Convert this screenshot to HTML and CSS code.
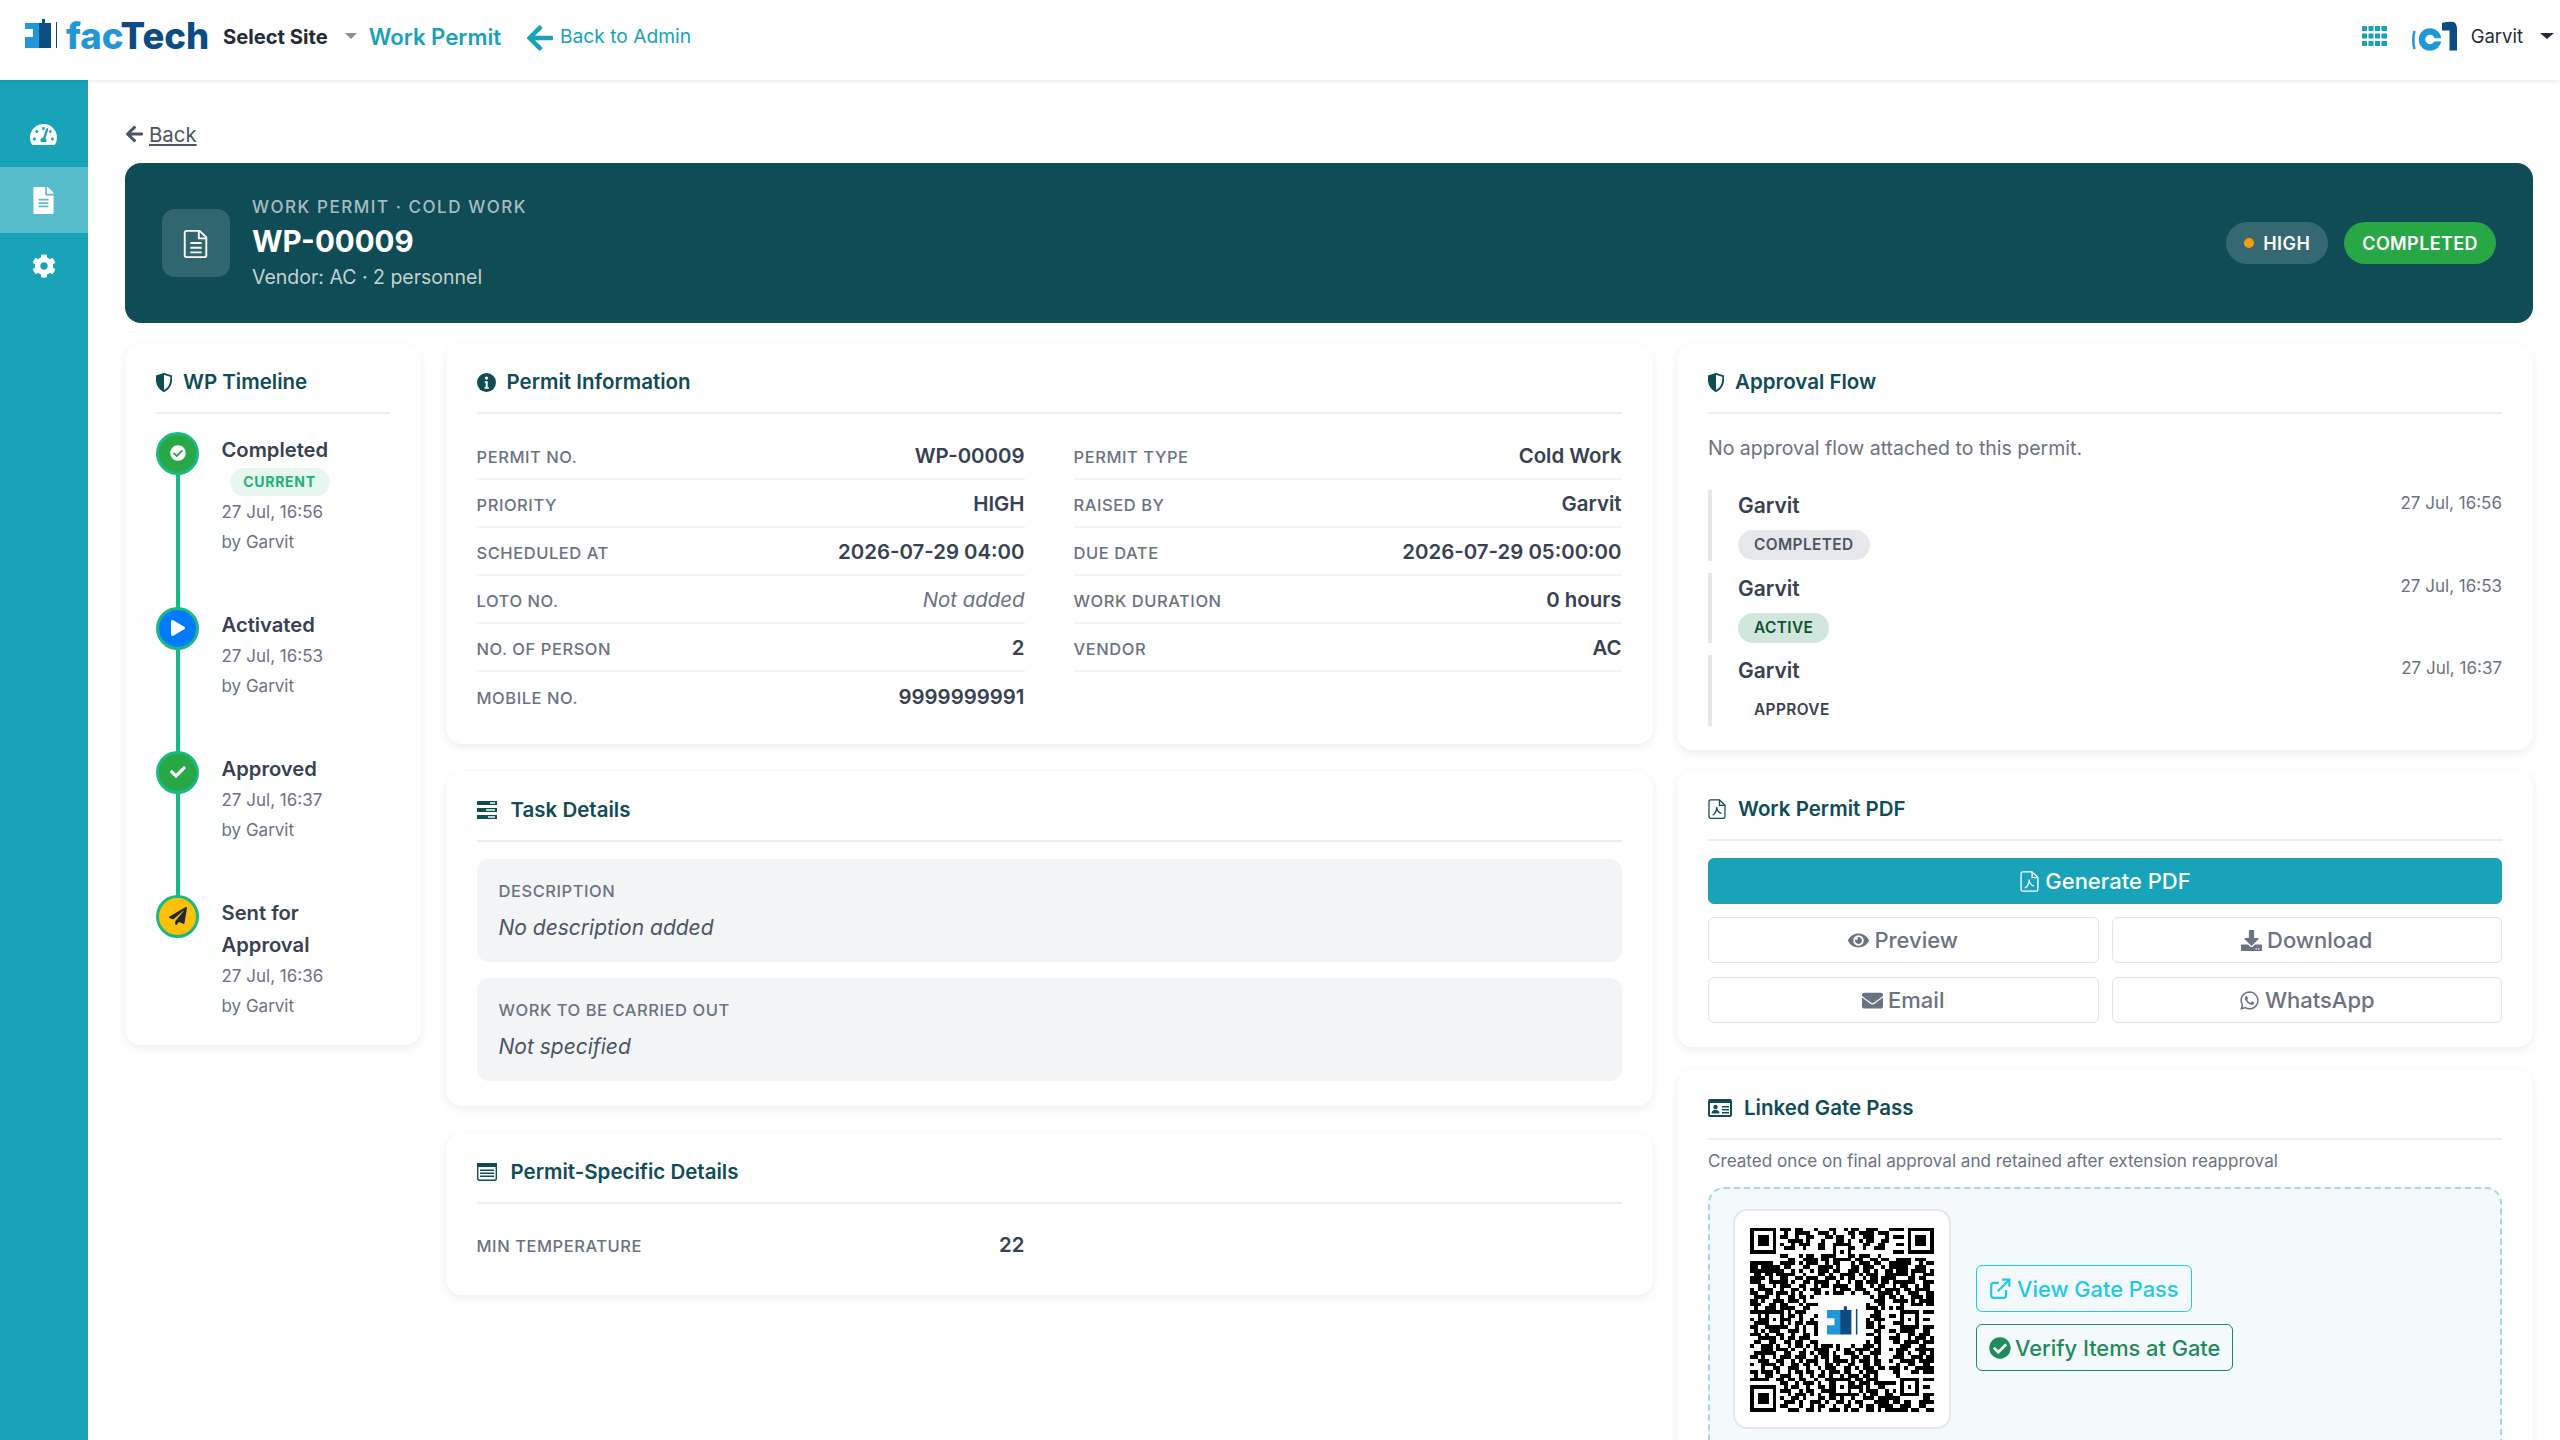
FILE: index.html
```html
<!DOCTYPE html>
<html lang="en">
<head>
<meta charset="utf-8">
<title>Work Permit WP-00009</title>
<link rel="stylesheet" href="styles.css">
</head>
<body>
<header class="topbar">
  <div class="brand">
    <svg class="brand-mark" viewBox="0 0 32 29"><path fill="#1f97d9" d="M0 4H14V29H0V18H8V10H0Z"/><path fill="#0b4d82" d="M14 4H17V0H20V4H26V29H14Z"/><path fill="#0b4d82" d="M31 3h1v26h-1z"/></svg>
    <span class="brand-name"><span class="brand-fac">fac</span><span class="brand-tech">Tech</span></span>
  </div>
  <span class="site-select">Select Site</span>
  <span class="caret caret-grey"></span>
  <span class="module-name">Work Permit</span>
  <a class="admin-link"><svg class="admin-arrow" viewBox="0 0 448 512"><path d="M257.5 445.1l-22.2 22.2c-9.4 9.4-24.6 9.4-33.9 0L7 273c-9.4-9.4-9.4-24.6 0-33.9L201.4 44.7c9.4-9.4 24.6-9.4 33.9 0l22.2 22.2c9.5 9.5 9.3 25-.4 34.3L136.6 216H424c13.3 0 24 10.7 24 24v32c0 13.3-10.7 24-24 24H136.6l120.5 114.8c9.8 9.3 10 24.8.4 34.3z"/></svg>Back to Admin</a>
  <div class="topbar-right">
    <svg class="apps" viewBox="0 0 25 20"><path d="M0 1a1 1 0 0 1 1-1h4v5H0zM6.500 0h5v5h-5zM13 0h5v5h-5zM19.500 0H24a1 1 0 0 1 1 1v4h-5.500zM0 7.500h5v5H0zM6.500 7.500h5v5h-5zM13 7.500h5v5h-5zM19.500 7.500H25v5h-5.500zM0 15h5v5H1a1 1 0 0 1-1-1zM6.500 15h5v5h-5zM13 15h5v5h-5zM19.500 15H25v4a1 1 0 0 1-1 1h-4.500z"/></svg>
    <svg class="user-logo" viewBox="0 0 45 30"><path d="M2.500 10Q0 19 2.500 28" fill="none" stroke="#1f97d9" stroke-width="2.500"/><circle cx="18" cy="18.500" r="8" fill="none" stroke="#1f97d9" stroke-width="6.500"/><path fill="#fff" d="M17 17.200h13v3.200H17z"/><path fill="#0b4d82" d="M30 2Q37 0 42 1 45 3 45 8V29.500H37.500V9.500H30Z"/></svg>
    <span class="user-name">Garvit</span>
    <span class="caret caret-dark"></span>
  </div>
</header>

<div class="shell">
  <nav class="sidebar">
    <a class="side-item"><svg class="side-icon" viewBox="0 0 576 512"><path d="M288 32C128.940 32 0 160.940 0 320c0 52.800 14.250 102.260 39.060 144.800 5.610 9.620 16.300 15.200 27.440 15.200h443c11.140 0 21.830-5.580 27.440-15.200C561.750 422.260 576 372.800 576 320c0-159.060-128.940-288-288-288zm0 64c14.710 0 26.580 10.130 30.320 23.650-1.110 2.260-2.640 4.230-3.450 6.670l-9.220 27.670c-5.130 3.490-10.970 6.010-17.640 6.010-17.670 0-32-14.330-32-32S270.330 96 288 96zM96 384c-17.670 0-32-14.330-32-32s14.330-32 32-32 32 14.330 32 32-14.330 32-32 32zm48-160c-17.670 0-32-14.330-32-32s14.330-32 32-32 32 14.330 32 32-14.330 32-32 32zm246.770-72.410l-61.330 184C343.130 347.330 352 364.540 352 384c0 11.720-3.380 22.550-8.880 32H232.880c-5.500-9.450-8.880-20.280-8.880-32 0-33.940 26.500-61.430 59.900-63.590l61.340-184.010c4.170-12.560 17.730-19.450 30.360-15.170 12.570 4.190 19.350 17.790 15.170 30.360zm14.660 57.200l15.520-46.550c3.470-1.290 7.130-2.230 11.050-2.230 17.670 0 32 14.330 32 32s-14.330 32-32 32c-11.380-.010-20.890-6.280-26.570-15.220zM480 384c-17.670 0-32-14.330-32-32s14.330-32 32-32 32 14.330 32 32-14.330 32-32 32z"/></svg></a>
    <a class="side-item side-active"><svg class="side-icon" viewBox="0 0 384 512"><path d="M224 136V0H24C10.700 0 0 10.700 0 24v464c0 13.300 10.700 24 24 24h336c13.300 0 24-10.700 24-24V160H248c-13.200 0-24-10.800-24-24zm64 236c0 6.600-5.400 12-12 12H108c-6.600 0-12-5.400-12-12v-8c0-6.600 5.400-12 12-12h168c6.600 0 12 5.400 12 12v8zm0-64c0 6.600-5.400 12-12 12H108c-6.600 0-12-5.400-12-12v-8c0-6.600 5.400-12 12-12h168c6.600 0 12 5.400 12 12v8zm0-72v8c0 6.600-5.400 12-12 12H108c-6.600 0-12-5.400-12-12v-8c0-6.600 5.400-12 12-12h168c6.600 0 12 5.400 12 12zm96-114.100v6.100H256V0h6.100c6.400 0 12.500 2.500 17 7l97.900 98c4.500 4.500 7 10.600 7 16.900z"/></svg></a>
    <a class="side-item"><svg class="side-icon side-gear" viewBox="0 0 512 512"><path d="M487.400 315.700l-42.600-24.600c4.300-23.200 4.300-47 0-70.200l42.600-24.600c4.900-2.800 7.100-8.600 5.500-14-11.100-35.600-30-67.800-54.700-94.600-3.800-4.100-10-5.100-14.800-2.300L380.800 110c-17.900-15.400-38.500-27.300-60.800-35.100V25.800c0-5.600-3.900-10.500-9.400-11.700-36.700-8.200-74.300-7.800-109.200 0-5.500 1.200-9.400 6.100-9.400 11.700V75c-22.200 7.900-42.800 19.800-60.800 35.100L88.700 85.500c-4.900-2.800-11-1.900-14.800 2.300-24.700 26.700-43.600 58.900-54.700 94.600-1.700 5.400.6 11.200 5.500 14L67.300 221c-4.300 23.200-4.300 47 0 70.200l-42.600 24.600c-4.900 2.800-7.100 8.600-5.500 14 11.100 35.600 30 67.800 54.700 94.600 3.800 4.100 10 5.100 14.800 2.300l42.600-24.600c17.900 15.400 38.500 27.300 60.800 35.100v49.200c0 5.600 3.900 10.500 9.400 11.700 36.700 8.200 74.300 7.800 109.200 0 5.500-1.200 9.400-6.100 9.400-11.700v-49.200c22.200-7.900 42.800-19.800 60.800-35.100l42.600 24.600c4.900 2.800 11 1.900 14.800-2.300 24.700-26.700 43.600-58.900 54.700-94.600 1.500-5.500-.7-11.300-5.600-14.100zM256 336c-44.100 0-80-35.900-80-80s35.900-80 80-80 80 35.900 80 80-35.900 80-80 80z"/></svg></a>
  </nav>

  <main class="content">
    <div class="back-row"><svg class="back-arrow" viewBox="0 0 448 512"><path d="M257.500 445.100l-22.200 22.200c-9.400 9.400-24.600 9.400-33.900 0L7 273c-9.400-9.400-9.400-24.600 0-33.900L201.400 44.700c9.400-9.400 24.600-9.400 33.900 0l22.200 22.200c9.500 9.500 9.300 25-.4 34.300L136.600 216H424c13.300 0 24 10.700 24 24v32c0 13.300-10.700 24-24 24H136.600l120.500 114.800c9.800 9.300 10 24.800.4 34.300z"/></svg><a class="back-link">Back</a></div>

    <section class="hero">
      <div class="hero-icon"><svg viewBox="0 0 16 16"><path d="M3 1.500h7l3.500 3.500v9.500a1 1 0 0 1-1 1h-9.500a1 1 0 0 1-1-1v-12a1 1 0 0 1 1-1zM9.500 1.500v4h4M5 8h6M5 10.500h6M5 13h6" fill="none" stroke="currentColor" stroke-width="1"/></svg></div>
      <div class="hero-text">
        <div class="hero-kicker">WORK PERMIT · COLD WORK</div>
        <h1 class="hero-title">WP-00009</h1>
        <div class="hero-sub">Vendor: AC · 2 personnel</div>
      </div>
      <div class="hero-badges">
        <span class="pill pill-high"><i class="pill-dot"></i>HIGH</span>
        <span class="pill pill-done">COMPLETED</span>
      </div>
    </section>

    <div class="columns">
      <div class="col">
        <section class="card timeline-card">
          <h2 class="card-title"><svg class="ti ti-shield" viewBox="1.500 .5 13 15"><path d="M8 1 2.200 2.800C1.700 8 3.500 12.800 8 15 12.500 12.800 14.300 8 13.800 2.800Z" fill="none" stroke="currentColor" stroke-width="1.500"/><path d="M8 1 2.200 2.800C1.700 8 3.500 12.800 8 15Z" fill="currentColor"/></svg>WP Timeline</h2>
          <ol class="timeline">
            <li class="step">
              <span class="dot dot-green"><svg class="dot-svg" viewBox="0 0 512 512"><path d="M504 256c0 136.967-111.033 248-248 248S8 392.967 8 256 119.033 8 256 8s248 111.033 248 248zM227.314 387.314l184-184c6.248-6.248 6.248-16.379 0-22.627l-22.627-22.627c-6.248-6.249-16.379-6.249-22.628 0L216 308.118l-70.059-70.059c-6.248-6.248-16.379-6.248-22.628 0l-22.627 22.627c-6.248 6.248-6.248 16.379 0 22.627l104 104c6.249 6.249 16.379 6.249 22.628.001z"/></svg></span>
              <div class="step-body"><div class="step-title">Completed</div><span class="current-tag">CURRENT</span><div class="step-meta">27 Jul, 16:56</div><div class="step-meta">by Garvit</div></div>
            </li>
            <li class="step">
              <span class="dot dot-blue"><svg class="dot-svg" viewBox="0 0 448 512"><path d="M424.400 214.700L72.400 6.600C43.800-10.300 0 6.100 0 47.900V464c0 37.500 40.700 60.100 72.400 41.300l352-208c31.400-18.500 31.500-64.100 0-82.600z"/></svg></span>
              <div class="step-body"><div class="step-title">Activated</div><div class="step-meta">27 Jul, 16:53</div><div class="step-meta">by Garvit</div></div>
            </li>
            <li class="step">
              <span class="dot dot-green"><svg class="dot-svg" viewBox="0 0 512 512"><path d="M173.898 439.404l-166.400-166.400c-9.997-9.997-9.997-26.206 0-36.204l36.203-36.204c9.997-9.998 26.207-9.998 36.204 0L192 312.690 432.095 72.596c9.997-9.997 26.207-9.997 36.204 0l36.203 36.204c9.997 9.997 9.997 26.206 0 36.204l-294.400 294.401c-9.998 9.997-26.207 9.997-36.204-.001z"/></svg></span>
              <div class="step-body"><div class="step-title">Approved</div><div class="step-meta">27 Jul, 16:37</div><div class="step-meta">by Garvit</div></div>
            </li>
            <li class="step step-last">
              <span class="dot dot-yellow"><svg class="dot-svg" viewBox="0 0 512 512"><path d="M476 3.200L12.500 270.600c-18.100 10.400-15.800 35.600 2.200 43.200L121 358.400l287.300-253.200c5.500-4.900 13.300 2.600 8.600 8.300L176 407v80.500c0 23.600 28.500 32.900 42.500 15.800L282 426l124.600 52.200c14.200 6 30.400-2.900 33-18.200l72-432C515 7.800 493.300-6.800 476 3.200z"/></svg></span>
              <div class="step-body"><div class="step-title">Sent for Approval</div><div class="step-meta">27 Jul, 16:36</div><div class="step-meta">by Garvit</div></div>
            </li>
          </ol>
        </section>
      </div>

      <div class="col">
        <section class="card info-card">
          <h2 class="card-title"><svg class="ti ti-info" viewBox="0 0 16 16"><circle cx="8" cy="8" r="8" fill="currentColor"/><circle cx="8" cy="4.300" r="1.300" fill="#fff"/><path d="M6.500 7h2.500v5h1v1.300H6.300V12h1V8.300h-.8z" fill="#fff"/></svg>Permit Information</h2>
          <div class="info-grid">
            <div class="info-row"><span class="lbl">PERMIT NO.</span><span class="val">WP-00009</span></div>
            <div class="info-row"><span class="lbl">PERMIT TYPE</span><span class="val">Cold Work</span></div>
            <div class="info-row"><span class="lbl">PRIORITY</span><span class="val">HIGH</span></div>
            <div class="info-row"><span class="lbl">RAISED BY</span><span class="val">Garvit</span></div>
            <div class="info-row"><span class="lbl">SCHEDULED AT</span><span class="val">2026-07-29 04:00</span></div>
            <div class="info-row"><span class="lbl">DUE DATE</span><span class="val">2026-07-29 05:00:00</span></div>
            <div class="info-row"><span class="lbl">LOTO NO.</span><span class="val val-empty">Not added</span></div>
            <div class="info-row"><span class="lbl">WORK DURATION</span><span class="val">0 hours</span></div>
            <div class="info-row"><span class="lbl">NO. OF PERSON</span><span class="val">2</span></div>
            <div class="info-row"><span class="lbl">VENDOR</span><span class="val">AC</span></div>
            <div class="info-row info-row-plain"><span class="lbl">MOBILE NO.</span><span class="val">9999999991</span></div>
          </div>
        </section>

        <section class="card task-card">
          <h2 class="card-title"><svg class="ti ti-tasks" viewBox="0 0 20 18"><path fill="currentColor" d="M0 0h20v4H0zM0 7h20v4H0zM0 14h20v4H0z"/><path fill="#fff" d="M13 1.200h5v1.600h-5zM9 8.200h9v1.600H9zM11 15.200h7v1.600h-7z"/></svg>Task Details</h2>
          <div class="note-box"><div class="lbl">DESCRIPTION</div><div class="note-val">No description added</div></div>
          <div class="note-box"><div class="lbl">WORK TO BE CARRIED OUT</div><div class="note-val">Not specified</div></div>
        </section>

        <section class="card specific-card">
          <h2 class="card-title"><svg class="ti ti-tasks" viewBox="0 0 20 18"><rect x=".7" y=".7" width="18.600" height="16.600" rx="1.500" fill="#fff" stroke="currentColor" stroke-width="1.400"/><path fill="currentColor" d="M0 0h20v4H0zM3 6.500h14v1.400H3zM3 9.500h14v1.400H3zM3 12.500h14v1.400H3z"/></svg>Permit-Specific Details</h2>
          <div class="spec-row"><span class="lbl">MIN TEMPERATURE</span><span class="val">22</span></div>
        </section>
      </div>

      <div class="col">
        <section class="card flow-card">
          <h2 class="card-title"><svg class="ti ti-shield" viewBox="1.500 .5 13 15"><path d="M8 1 2.200 2.800C1.700 8 3.500 12.800 8 15 12.500 12.800 14.300 8 13.800 2.800Z" fill="none" stroke="currentColor" stroke-width="1.500"/><path d="M8 1 2.200 2.800C1.700 8 3.500 12.800 8 15Z" fill="currentColor"/></svg>Approval Flow</h2>
          <p class="flow-note">No approval flow attached to this permit.</p>
          <div class="flow-list">
            <div class="flow-item"><div><div class="flow-name">Garvit</div><span class="flow-tag tag-grey">COMPLETED</span></div><span class="flow-date">27 Jul, 16:56</span></div>
            <div class="flow-item"><div><div class="flow-name">Garvit</div><span class="flow-tag tag-green">ACTIVE</span></div><span class="flow-date">27 Jul, 16:53</span></div>
            <div class="flow-item"><div><div class="flow-name">Garvit</div><span class="flow-tag tag-plain">APPROVE</span></div><span class="flow-date">27 Jul, 16:37</span></div>
          </div>
        </section>

        <section class="card pdf-card">
          <h2 class="card-title"><svg class="ti ti-pdf" viewBox="0 0 14 16"><path d="M2 .6h7l4.400 4.400v9a1.400 1.400 0 0 1-1.400 1.400H2A1.400 1.400 0 0 1 .6 14V2A1.400 1.400 0 0 1 2 .6zM9 .6V5h4.400M3.500 13c2-1 3.500-4 3.200-6.500C7 9 8.500 11 10.500 11.500" fill="none" stroke="currentColor" stroke-width="1"/></svg>Work Permit PDF</h2>
          <button class="btn btn-primary"><svg class="btn-icon" viewBox="0 0 14 16"><path d="M2 .6h7l4.400 4.400v9a1.400 1.400 0 0 1-1.400 1.400H2A1.400 1.400 0 0 1 .6 14V2A1.400 1.400 0 0 1 2 .6zM9 .6V5h4.400M3.500 13c2-1 3.500-4 3.200-6.500C7 9 8.500 11 10.500 11.500" fill="none" stroke="currentColor" stroke-width="1"/></svg>Generate PDF</button>
          <div class="btn-grid">
            <button class="btn"><svg class="btn-icon" viewBox="0 0 576 512"><path d="M572.520 241.400C518.290 135.590 410.930 64 288 64S57.680 135.640 3.480 241.410a32.350 32.350 0 0 0 0 29.190C57.710 376.410 165.070 448 288 448s230.320-71.640 284.520-177.410a32.350 32.350 0 0 0 0-29.190zM288 400a144 144 0 1 1 144-144 143.930 143.930 0 0 1-144 144zm0-240a95.310 95.310 0 0 0-25.310 3.790 47.850 47.850 0 0 1-66.900 66.900A95.780 95.780 0 1 0 288 160z"/></svg>Preview</button>
            <button class="btn"><svg class="btn-icon" viewBox="0 0 512 512"><path d="M216 0h80c13.300 0 24 10.700 24 24v168h87.700c17.800 0 26.700 21.500 14.100 34.100L269.700 378.300c-7.500 7.500-19.800 7.500-27.300 0L90.100 226.100c-12.600-12.600-3.700-34.100 14.100-34.100H192V24c0-13.300 10.700-24 24-24zm296 376v112c0 13.300-10.700 24-24 24H24c-13.300 0-24-10.700-24-24V376c0-13.300 10.700-24 24-24h146.700l49 49c20.100 20.100 52.500 20.100 72.600 0l49-49H488c13.300 0 24 10.700 24 24zm-124 88c0-11-9-20-20-20s-20 9-20 20 9 20 20 20 20-9 20-20zm64 0c0-11-9-20-20-20s-20 9-20 20 9 20 20 20 20-9 20-20z"/></svg>Download</button>
            <button class="btn"><svg class="btn-icon" viewBox="0 0 512 512"><path d="M502.300 190.800c3.900-3.100 9.700-.2 9.700 4.700V400c0 26.500-21.500 48-48 48H48c-26.500 0-48-21.500-48-48V195.600c0-5 5.700-7.800 9.700-4.700 22.400 17.400 52.100 39.500 154.100 113.600 21.100 15.400 56.700 47.800 92.200 47.600 35.700.3 72-32.800 92.300-47.600 102-74.100 131.600-96.300 154-113.700zM256 320c23.200.4 56.600-29.200 73.400-41.400 132.700-96.300 142.800-104.700 173.400-128.700 5.800-4.500 9.200-11.500 9.200-18.900v-19c0-26.500-21.500-48-48-48H48C21.500 64 0 85.500 0 112v19c0 7.400 3.400 14.300 9.200 18.900 30.600 23.900 40.700 32.400 173.400 128.700 16.800 12.200 50.200 41.800 73.400 41.400z"/></svg>Email</button>
            <button class="btn"><svg class="btn-icon" viewBox="0 0 448 512"><path d="M380.900 97.100C339 55.100 283.200 32 223.900 32c-122.400 0-222 99.600-222 222 0 39.100 10.200 77.300 29.600 111L0 480l117.700-30.900c32.400 17.700 68.900 27 106.100 27h.1c122.300 0 224.100-99.600 224.100-222 0-59.300-25.200-115-67.100-157zm-157 341.600c-33.200 0-65.700-8.900-94-25.700l-6.700-4-69.800 18.300L72 359.200l-4.400-7c-18.500-29.400-28.200-63.300-28.200-98.200 0-101.700 82.800-184.500 184.600-184.500 49.300 0 95.600 19.200 130.400 54.100 34.800 34.900 56.200 81.200 56.100 130.500 0 101.800-84.900 184.600-186.600 184.600zm101.200-138.200c-5.500-2.800-32.800-16.200-37.900-18-5.100-1.900-8.800-2.800-12.500 2.800-3.700 5.600-14.300 18-17.600 21.800-3.200 3.700-6.500 4.200-12 1.400-32.600-16.300-54-29.100-75.500-66-5.700-9.800 5.700-9.100 16.300-30.300 1.800-3.700.9-6.900-.5-9.700-1.400-2.800-12.500-30.100-17.100-41.200-4.500-10.800-9.100-9.300-12.500-9.500-3.200-.2-6.900-.2-10.600-.2-3.700 0-9.700 1.400-14.800 6.900-5.100 5.600-19.400 19-19.400 46.300 0 27.300 19.900 53.700 22.600 57.400 2.800 3.700 39.100 59.700 94.800 83.800 35.200 15.200 49 16.500 66.600 13.900 10.700-1.600 32.800-13.400 37.400-26.400 4.600-13 4.600-24.100 3.200-26.400-1.300-2.500-5-3.900-10.500-6.600z"/></svg>WhatsApp</button>
          </div>
        </section>

        <section class="card gate-card">
          <h2 class="card-title"><svg class="ti ti-id" viewBox="0 0 24 18"><rect width="24" height="18" rx="2" fill="currentColor"/><path fill="#fff" d="M2 4h20v12H2z"/><circle cx="7.500" cy="8" r="2.200" fill="currentColor"/><path d="M3.500 14.500c0-5 8-5 8 0zM14 7h7v1.500h-7zM14 10h7v1.500h-7zM14 13h7v1.500h-7z" fill="currentColor"/></svg>Linked Gate Pass</h2>
          <p class="gate-note">Created once on final approval and retained after extension reapproval</p>
          <div class="gate-box">
            <div class="qr-frame">
              <svg class="qr" viewBox="0 0 49 49" shape-rendering="crispEdges">
                <path fill="none" stroke="#000" stroke-width="1" d="M8 .5h3m1 0h2m3 0h1m3 0h2m2 0h1m1 0h2m2 0h3m3 0h2M9 1.500h1m2 0h4m2 0h3m1 0h1m3 0h2m1 0h4m1 0h3M8 2.500h2m2 0h1m2 0h2m3 0h2m1 0h2m2 0h1m2 0h3m3 0h1M10 3.500h4m1 0h1m3 0h1m3 0h2m1 0h1m2 0h1m1 0h2m2 0h2M8 4.500h1m2 0h1m1 0h3m2 0h2m2 0h5m3 0h2m2 0h2M9 5.500h3m2 0h1m3 0h2m2 0h1m1 0h1m1 0h2m2 0h1m2 0h3M8 7.500h2m3 0h1m1 0h2m2 0h3m1 0h1m3 0h1m1 0h3m2 0h1M10 8.500h2m2 0h4m1 0h2m3 0h3m1 0h2m2 0h2m1 0h2M0 9.500h6m2 0h4m1 0h1m1 0h3m2 0h1m1 0h2m3 0h1m1 0h3m1 0h2m2 0h3m1 0h2M0 10.500h2m1 0h5m1 0h2m3 0h2m2 0h4m1 0h1m3 0h2m1 0h3m2 0h1m1 0h5M0 11.500h9m2 0h1m1 0h1m2 0h1m1 0h3m1 0h2m2 0h3m1 0h2m1 0h1m2 0h2m1 0h3M1 12.500h2m1 0h2m1 0h5m2 0h1m3 0h2m1 0h1m2 0h4m1 0h1m1 0h3m2 0h3M0 13.500h4m1 0h1m2 0h2m2 0h2m1 0h3m2 0h3m1 0h1m1 0h2m2 0h1m1 0h2m1 0h4M0 14.500h3m2 0h5m1 0h1m2 0h2m1 0h4m2 0h1m2 0h1m1 0h2m1 0h3m1 0h2m2 0h2M2 15.500h2m2 0h1m1 0h3m2 0h2m2 0h1m1 0h2m1 0h4m2 0h2m2 0h1m1 0h2m2 0h1M0 16.500h1m1 0h4m2 0h1m2 0h2m1 0h1m1 0h3m3 0h1m1 0h3m1 0h3m2 0h2m1 0h2M0 17.500h2m2 0h2m1 0h3m1 0h1m1 0h1m3 0h2m1 0h1m1 0h3m2 0h1m2 0h2m2 0h4M1 18.500h4m2 0h1m2 0h2m1 0h2m1 0h1m2 0h3m1 0h1m2 0h2m1 0h2m1 0h1m1 0h2M0 19.500h2m1 0h1m2 0h3m1 0h3m1 0h1m3 0h2m2 0h1m2 0h3m1 0h2m2 0h3M0 20.500h3m2 0h2m1 0h2m3 0h1m1 0h3m1 0h1m1 0h3m2 0h1m1 0h2m1 0h1m2 0h2M1 21.500h1m2 0h3m1 0h4m2 0h2m2 0h1m2 0h2m1 0h2m2 0h1m2 0h3m1 0h1M0 22.500h4m1 0h1m1 0h2m1 0h1m1 0h3m3 0h1m1 0h1m2 0h3m1 0h1m1 0h2m2 0h2M2 23.500h1m2 0h3m2 0h2m1 0h1m3 0h2m1 0h3m1 0h1m1 0h2m1 0h2m1 0h3M0 24.500h1m1 0h2m1 0h1m2 0h3m2 0h1m2 0h1m1 0h2m3 0h2m2 0h2m2 0h1m1 0h3M1 25.500h3m3 0h2m1 0h1m1 0h2m1 0h3m1 0h2m1 0h1m1 0h3m1 0h1m2 0h2m1 0h1M0 26.500h2m2 0h4m1 0h1m2 0h1m1 0h1m2 0h2m2 0h1m1 0h2m2 0h3m1 0h2m1 0h2M1 27.500h1m1 0h1m1 0h3m2 0h3m1 0h1m2 0h2m1 0h3m2 0h1m1 0h2m1 0h1m2 0h2M0 28.500h3m1 0h1m2 0h2m2 0h1m2 0h2m1 0h1m2 0h1m1 0h3m2 0h2m1 0h3m1 0h1M2 29.500h5m1 0h1m1 0h2m1 0h3m2 0h2m1 0h1m2 0h2m1 0h1m1 0h2m2 0h2M1 30.500h2m2 0h2m2 0h2m1 0h2m2 0h3m1 0h2m1 0h3m2 0h2m1 0h1m1 0h2M0 31.500h1m2 0h3m1 0h1m2 0h1m1 0h2m1 0h1m1 0h1m1 0h3m1 0h1m3 0h1m2 0h3m1 0h1M3 32.500h3m1 0h3m1 0h1m2 0h1m2 0h4m2 0h1m1 0h2m1 0h4m1 0h2M1 33.500h6m2 0h2m2 0h2m1 0h1m1 0h3m1 0h1m2 0h3m1 0h1m2 0h3M0 34.500h2m1 0h1m2 0h1m1 0h3m1 0h3m2 0h1m1 0h2m1 0h2m3 0h2m1 0h2m1 0h1M2 35.500h3m2 0h2m2 0h1m1 0h1m1 0h3m2 0h1m1 0h4m1 0h1m1 0h3m1 0h2M0 36.500h1m2 0h4m1 0h1m2 0h2m1 0h2m1 0h1m2 0h2m1 0h1m2 0h2m2 0h2m1 0h2M3 37.500h1m2 0h2m2 0h3m2 0h1m2 0h1m1 0h3m2 0h2m1 0h1m1 0h3m1 0h2M0 38.500h2m1 0h3m1 0h1m2 0h1m1 0h2m1 0h2m2 0h1m1 0h3m1 0h2m2 0h1m1 0h3M1 39.500h1m2 0h2m2 0h3m2 0h1m2 0h1m1 0h2m1 0h1m2 0h1m1 0h3m1 0h2m1 0h1M0 40.500h5m2 0h2m1 0h2m1 0h2m2 0h1m2 0h3m1 0h2m2 0h2m1 0h3M8 41.500h2m2 0h1m1 0h3m1 0h1m2 0h1m1 0h2m2 0h1m1 0h3m1 0h4M9 42.500h1m1 0h2m2 0h1m2 0h2m1 0h2m1 0h1m2 0h3m1 0h1m2 0h2M8 43.500h3m2 0h1m1 0h2m2 0h3m1 0h1m1 0h2m2 0h1m1 0h3m2 0h1M10 44.500h1m1 0h3m1 0h1m1 0h1m2 0h2m1 0h1m2 0h2m1 0h1m1 0h2m2 0h2M8 45.500h1m2 0h2m1 0h1m3 0h2m1 0h2m1 0h1m2 0h1m2 0h3m1 0h3M9 46.500h3m1 0h1m2 0h3m1 0h1m2 0h2m1 0h1m1 0h2m3 0h4M8 47.500h2m3 0h1m2 0h1m1 0h2m2 0h1m2 0h2m2 0h1m1 0h2m1 0h3M10 48.500h3m2 0h2m1 0h1m2 0h3m1 0h1m1 0h2m2 0h2m1 0h1m1 0h3"/>
                <path fill="none" stroke="#000" stroke-width="1" d="M39 .5h2M38 2.500h3M39 4.500h2M38 6.500h3M39 8.500h4m1 0h3M37 9.500h2m1 0h3m2 0h1m1 0h2M38 10.500h4m2 0h3M37 11.500h1m2 0h2m1 0h4m1 0h1M39 12.500h3m1 0h1m2 0h3M37 13.500h2m3 0h2m1 0h2M38 14.500h1m1 0h4m2 0h3M40 15.500h2m2 0h1m1 0h2M37 16.500h3m1 0h2m1 0h4M39 17.500h1m2 0h3m2 0h2M37 18.500h2m1 0h1m2 0h3m1 0h2M38 19.500h4m1 0h1m1 0h4M40 20.500h1m2 0h3m1 0h2M37 21.500h1m1 0h2M46 22.500h3M37 23.500h2M46 24.500h2M38 25.500h2M46 26.500h3M37 27.500h2m1 0h4m2 0h2M39 28.500h1m2 0h2m1 0h3M37 29.500h3m2 0h1m1 0h3m1 0h1M38 30.500h2m1 0h4m1 0h3M40 31.500h3m2 0h2M37 32.500h1m1 0h3m2 0h5M39 33.500h2m1 0h1m2 0h2m1 0h1M38 34.500h3m2 0h3m1 0h2M37 35.500h1m2 0h4m1 0h4M39 36.500h1m2 0h2m2 0h2M37 37.500h3m1 0h1m2 0h5M38 38.500h2m3 0h2m1 0h3M39 39.500h1M46 40.500h3M37 41.500h2M46 42.500h2M38 43.500h1M46 44.500h3M37 45.500h3m6 0h2M38 46.500h2m1 0h2m2 0h4M37 47.500h1m2 0h3m2 0h2M39 48.500h3m1 0h2m2 0h2"/>
                <path fill="#fff" d="M0 0h8v8H0zM41 0h8v8h-8zM0 41h8v8H0zM18 18h13v13H18zM22 4h5v5h-5zM4 22h5v5H4zM40 22h5v5h-5zM22 40h5v5h-5zM40 40h5v5h-5z"/>
                <path fill="#000" fill-rule="evenodd" d="M0 0h7v7H0zM1 1v5h5V1zM2 2h3v3H2zM42 0h7v7h-7zM43 1v5h5V1zM44 2h3v3h-3zM0 42h7v7H0zM1 43v5h5v-5zM2 44h3v3H2z"/>
                <path fill="#000" d="M22 4h1v5h-1zM26 4h1v5h-1zM23 4h3v1h-3zM23 8h3v1h-3zM24 6h1v1h-1zM4 22h5v1H4zM4 26h5v1H4zM4 23h1v3H4zM8 23h1v3H8zM6 24h1v1H6zM40 22h5v1h-5zM40 26h5v1h-5zM40 23h1v3h-1zM44 23h1v3h-1zM42 24h1v1h-1zM22 40h5v1h-5zM22 44h5v1h-5zM22 41h1v3h-1zM26 41h1v3h-1zM24 42h1v1h-1zM40 40h5v1h-5zM40 44h5v1h-5zM40 41h1v3h-1zM44 41h1v3h-1zM42 42h1v1h-1z"/>
                <g shape-rendering="auto"><path fill="#1f97d9" d="M20.500 22h3.500v6.500h-3.500v-2.500h2v-1.800h-2z"/><path fill="#0b4d82" d="M24 22h1v-1h.8v1H27v6.500h-3z"/><path fill="#0b4d82" d="M28.200 21.700h.4v6.800h-.4z"/></g>
              </svg>
            </div>
            <div class="gate-actions">
              <a class="act act-view"><svg class="act-icon" viewBox="0 0 20 20"><path d="M15.500 11v5a2 2 0 0 1-2 2H4a2 2 0 0 1-2-2V6.500a2 2 0 0 1 2-2h5M8 12 18 2M12 1.500h6.500V8" fill="none" stroke="currentColor" stroke-width="2"/></svg>View Gate Pass</a>
              <a class="act act-verify"><svg class="act-icon" viewBox="0 0 512 512"><path fill="currentColor" d="M504 256c0 136.967-111.033 248-248 248S8 392.967 8 256 119.033 8 256 8s248 111.033 248 248zM227.314 387.314l184-184c6.248-6.248 6.248-16.379 0-22.627l-22.627-22.627c-6.248-6.249-16.379-6.249-22.628 0L216 308.118l-70.059-70.059c-6.248-6.248-16.379-6.248-22.628 0l-22.627 22.627c-6.248 6.248-6.248 16.379 0 22.627l104 104c6.249 6.249 16.379 6.249 22.628.001z"/></svg>Verify Items at Gate</a>
            </div>
          </div>
        </section>
      </div>
    </div>
  </main>
</div>
</body>
</html>
```

FILE: styles.css
```css
* { box-sizing: border-box; }
html, body { margin: 0; height: 1440px; overflow: hidden; background: #fff; }
body { font-family: Inter, "Noto Sans", sans-serif; color: #374151; }
h1, h2, p, ol { margin: 0; padding: 0; }
ol { list-style: none; }

.topbar { height: 80px; display: flex; align-items: center; padding: 0 0 8px 25px; background: #fff; box-shadow: 0 1px 4px rgba(0,0,0,.1); position: relative; z-index: 2; }
.brand { display: flex; align-items: center; width: 198px; flex: none; }
.brand-mark { width: 32px; height: 29px; margin-bottom: 5px; flex: none; }
.brand-name { font-weight: 800; font-size: 36.5px; line-height: 1; margin-left: 9px; letter-spacing: 0; }
.brand-fac { color: #1f97d9; }
.brand-tech { color: #0b4d82; }
.site-select { font-size: 20.2px; font-weight: 700; color: #222b36; }
.caret { width: 0; height: 0; border-left: 6px solid transparent; border-right: 6px solid transparent; }
.caret-grey { border-top: 6px solid #8a8f96; margin-left: 17px; margin-right: 12px; }
.caret-dark { border-left-width: 7px; border-right-width: 7px; border-top: 6px solid #222b36; margin-left: 17px; }
.module-name { font-size: 22.2px; font-weight: 600; color: #17a2b8; }
.admin-link { display: flex; align-items: center; font-size: 19.2px; color: #17a2b8; margin-left: 26px; }
.admin-arrow { width: 26px; height: 30px; fill: #17a2b8; margin-right: 7px; margin-top: 4px; }
.topbar-right { margin-left: auto; display: flex; align-items: center; padding-right: 6px; }
.apps { width: 25px; height: 20px; fill: #17a2b8; }
.user-logo { width: 45px; height: 30px; margin-left: 25px; }
.user-name { font-size: 18.5px; color: #222b36; margin-left: 14px; }

.shell { display: flex; height: 1360px; }
.sidebar { width: 88px; flex: none; background: #19a3b9; padding-top: 21px; }
.side-item { height: 66px; display: flex; align-items: center; justify-content: center; }
.side-active { background: rgba(255,255,255,.27); }
.side-icon { height: 27px; width: 27px; fill: #fff; margin-right: 1px; }
.side-gear { width: 24px; height: 24px; }

.content { flex: 1; min-width: 0; padding: 38px 27px 0 37px; }
.back-row { display: flex; align-items: center; height: 32px; font-size: 20.4px; color: #4b5563; margin-bottom: 13px; }
.back-arrow { width: 17px; height: 20px; fill: #4b5563; margin-right: 6px; margin-left: 1px; }
.back-link { text-decoration: underline; }

.hero { height: 160px; background: #0f4c55; border-radius: 16px; display: flex; align-items: center; padding: 0 37px; color: #fff; }
.hero-icon { width: 68px; height: 68px; border-radius: 13px; background: rgba(255,255,255,.15); display: flex; align-items: center; justify-content: center; margin-right: 22px; flex: none; }
.hero-icon svg { width: 30px; height: 30px; }
.hero-kicker { font-size: 17px; font-weight: 500; letter-spacing: 1.55px; color: rgba(255,255,255,.65); line-height: 24px; }
.hero-title { font-size: 29.5px; font-weight: 700; line-height: 44px; }
.hero-sub { font-size: 19.5px; color: rgba(255,255,255,.75); line-height: 28px; }
.hero-badges { margin-left: auto; display: flex; gap: 16px; }
.pill { height: 42px; border-radius: 21px; display: flex; align-items: center; font-size: 18px; font-weight: 600; padding: 0 18px; letter-spacing: .4px; }
.pill-high { background: rgba(255,255,255,.16); }
.pill-done { background: #28a745; }
.pill-dot { width: 10px; height: 10px; border-radius: 50%; background: #f59e0b; margin-right: 9px; }

.columns { display: grid; grid-template-columns: 296px 1207px 856px; gap: 24.5px; margin-top: 21px; align-items: start; }
.col { display: flex; flex-direction: column; }
.card { background: #fff; border-radius: 16px; box-shadow: 0 3px 10px rgba(0,0,0,.07); padding: 21px 31px 0; flex: none; }
.card-title { display: flex; align-items: center; font-size: 20.5px; font-weight: 600; color: #0f4c55; height: 49px; padding-bottom: 13px; border-bottom: 2px solid #eceef1; line-height: 1; }
.ti { color: #0f4c55; flex: none; margin-right: 11px; }
.ti-shield { width: 16px; height: 19px; }
.ti-info { width: 19px; height: 19px; margin-right: 11px; }
.ti-tasks { width: 20px; height: 18px; margin-right: 14px; }
.ti-pdf { width: 18px; height: 20px; margin-right: 12px; }
.ti-id { width: 24px; height: 18px; margin-right: 12px; }

.timeline-card { height: 701px; }
.timeline { padding-top: 17.5px; }
.step { display: flex; position: relative; padding-bottom: 49px; }
.step-last { padding-bottom: 0; }
.step::before { content: ""; position: absolute; left: 19.500px; top: 10px; bottom: -10px; width: 4px; background: #1cb884; }
.step-last::before { display: none; }
.dot { width: 43px; height: 43px; border-radius: 50%; border: 3px solid #1cb884; display: flex; align-items: center; justify-content: center; flex: none; position: relative; z-index: 1; }
.dot-green { background: #28a745; }
.dot-blue { background: #007bff; }
.dot-yellow { background: #ffc107; }
.dot-svg { width: 16px; height: 16px; fill: #fff; }
.dot-yellow .dot-svg { fill: #1f2937; width: 18px; height: 18px; }
.step-body { margin-left: 22.5px; flex: 1; min-width: 0; }
.step-title { font-size: 20.2px; font-weight: 600; line-height: 32px; color: #374151; margin-top: 2px; }
.step-meta { font-size: 17px; line-height: 30.500px; color: #6b7280; }
.current-tag { display: block; width: 100px; height: 28px; border-radius: 14px; background: #e8f6f0; color: #1cb47a; font-size: 14px; font-weight: 700; letter-spacing: .7px; line-height: 28px; text-align: center; margin: 2px 0 1px 8px; }

.info-card { height: 400px; }
.info-grid { display: grid; grid-template-columns: 1fr 1fr; column-gap: 49px; padding-top: 17.5px; }
.info-row { height: 48px; display: flex; justify-content: space-between; align-items: center; border-bottom: 2px solid #f3f4f6; padding-top: 4px; }
.info-row-plain { border-bottom: 0; }
.lbl { font-size: 16.5px; font-weight: 500; letter-spacing: .55px; color: #6b7280; }
.val { font-size: 20.4px; font-weight: 600; color: #374151; margin-top: -2px; }
.val-empty { font-weight: 400; font-style: italic; color: #6b7280; }

.task-card { height: 334px; margin-top: 28px; }
.note-box { background: #f3f4f6; border-radius: 12px; padding: 22px 22px 0; height: 103px; margin-top: 17px; }
.note-box + .note-box { margin-top: 16px; }
.note-box .lbl { display: block; line-height: 20px; }
.note-val { font-size: 21px; font-style: italic; color: #4b5563; margin-top: 13px; line-height: 28px; }

.specific-card { height: 161px; margin-top: 28px; }
.spec-row { display: flex; justify-content: space-between; align-items: center; width: 548px; padding-top: 30px; }

.flow-card { height: 406px; }
.flow-note { font-size: 19.5px; color: #6b7280; line-height: 30px; margin-top: 19px; }
.flow-list { display: flex; flex-direction: column; gap: 12px; margin-top: 27px; }
.flow-item { height: 70.5px; border-left: 4px solid #e5e7eb; padding-left: 26px; display: flex; justify-content: space-between; align-items: flex-start; }
.flow-name { font-size: 21px; font-weight: 600; line-height: 32px; color: #374151; }
.flow-date { font-size: 17px; color: #6b7280; line-height: 26px; }
.flow-tag { display: inline-block; height: 30px; line-height: 30px; padding: 0 16px; border-radius: 15px; font-size: 15.4px; font-weight: 600; letter-spacing: .4px; margin-top: 8px; }
.tag-grey { background: #e5e7eb; color: #4b5563; }
.tag-green { background: #d1e7dd; color: #0f5132; }
.tag-plain { color: #374151; }

.pdf-card { height: 276px; margin-top: 21px; }
.btn { display: flex; align-items: center; justify-content: center; width: 100%; height: 46px; font: 500 22px Inter, sans-serif; color: #6b7280; background: #fff; border: 1px solid #e0e3e8; border-radius: 6px; padding: 0; }
.btn-icon { width: 21px; height: 21px; fill: currentColor; margin-right: 5px; flex: none; }
.btn-primary { background: #19a3b9; border-color: #19a3b9; color: #fff; margin-top: 17px; }
.btn-grid { display: grid; grid-template-columns: 1fr 1fr; gap: 14px 13px; margin-top: 13px; }

.gate-card { height: 400px; margin-top: 23px; }
.gate-note { font-size: 17.1px; color: #6b7280; line-height: 24px; margin-top: 9px; }
.gate-box { height: 400px; background: #f4fafb; border: 2px dashed #a5d9e2; border-radius: 16px; margin-top: 14px; padding: 20px 23px; display: flex; align-items: flex-start; }
.qr-frame { width: 218px; height: 220px; background: #fff; border: 2px solid #e5e7eb; border-radius: 14px; display: flex; align-items: center; justify-content: center; flex: none; }
.qr { width: 184px; height: 185px; display: block; }
.gate-actions { display: flex; flex-direction: column; align-items: flex-start; gap: 12px; margin-left: 25px; margin-top: 56px; }
.act { display: flex; align-items: center; height: 47px; border-radius: 6px; border: 1.5px solid; padding: 0 12px; font-size: 21.8px; font-weight: 500; background: transparent; }
.act-icon { width: 22px; height: 22px; margin-right: 6px; flex: none; }
.act-view { color: #22c8e8; border-color: #22c8e8; }
.act-verify { color: #1f8a5a; border-color: #1f8a5a; }
.act-verify .act-icon { margin-right: 4px; }
```
